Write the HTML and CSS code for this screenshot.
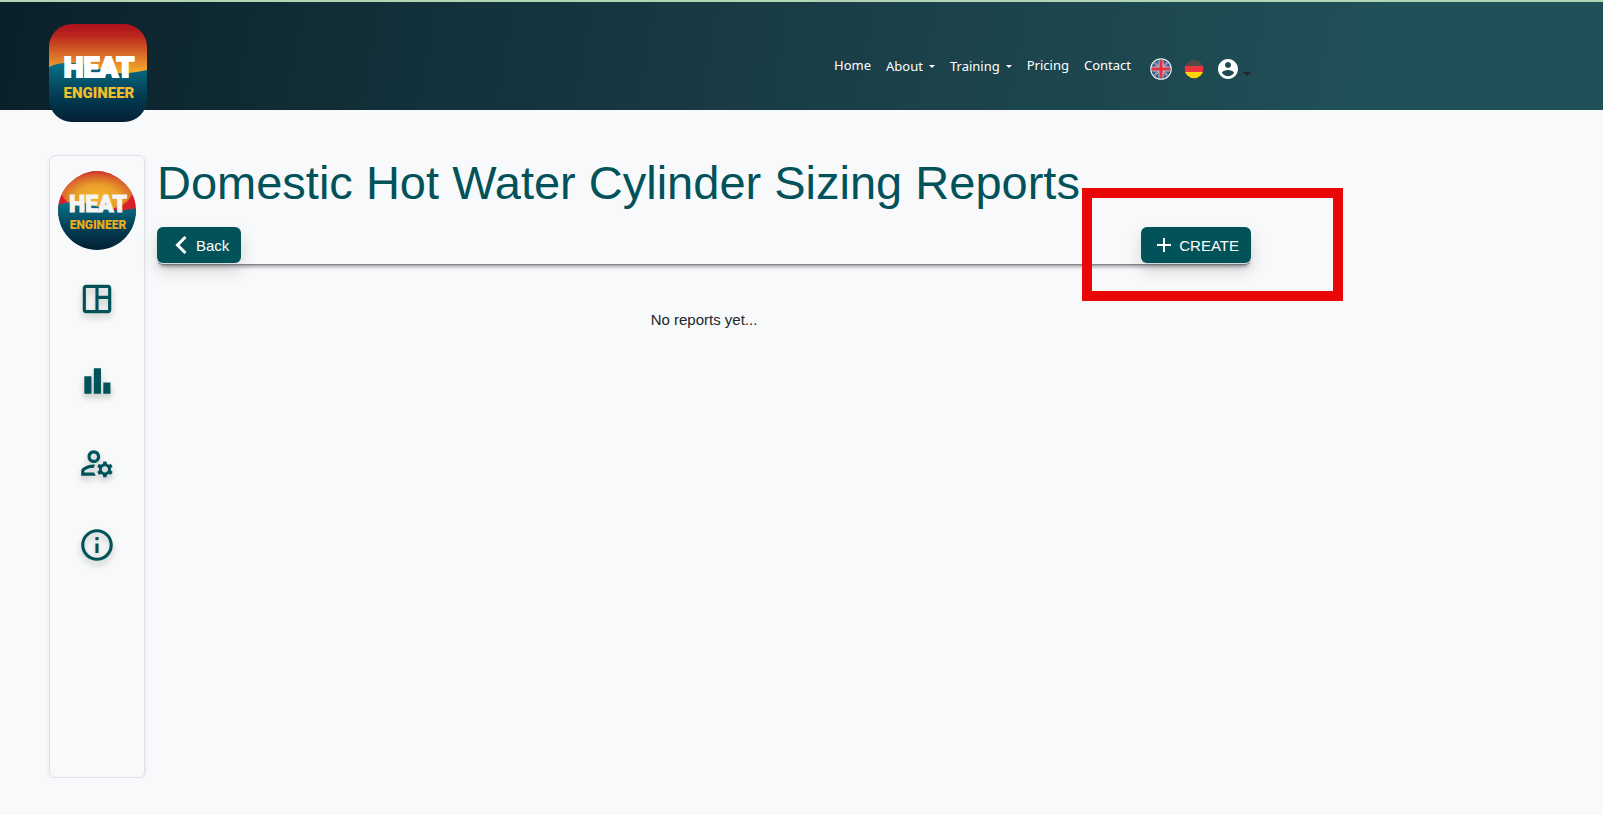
FILE: index.html
```html
<!DOCTYPE html>
<html lang="en">
<head>
<meta charset="utf-8">
<meta name="viewport" content="width=device-width, initial-scale=1">
<title>Heat Engineer – Cylinder Sizing Reports</title>
<link rel="stylesheet" href="styles.css">
</head>
<body>
<header class="header">
  <div class="container header-row">
    <a class="brand" href="#" aria-label="Heat Engineer">
      <svg viewBox="0 0 98 98" class="logo">
        <defs>
          <linearGradient id="fire" x1="0" y1="0" x2="0" y2="1"><stop offset="0" stop-color="#ad111d"/><stop offset=".22" stop-color="#b9251e"/><stop offset=".75" stop-color="#e88a2b"/><stop offset="1" stop-color="#f4bc2c"/></linearGradient>
          <linearGradient id="sea" x1="0" y1="0" x2="0" y2="1"><stop offset="0" stop-color="#08748a"/><stop offset=".5" stop-color="#034158"/><stop offset="1" stop-color="#022033"/></linearGradient>
          <clipPath id="tile"><rect width="98" height="98" rx="23"/></clipPath>
        </defs>
        <g clip-path="url(#tile)">
          <rect width="98" height="52" fill="url(#fire)"/>
          <path d="M0 43C12 37 28 38 42 42C58 47 66 53 98 46V98H0Z" fill="url(#sea)"/>
        </g>
        <text class="logo-heat" x="50" y="53" text-anchor="middle">HEAT</text>
        <text class="logo-engineer" x="50" y="74" text-anchor="middle">ENGINEER</text>
      </svg>
    </a>
    <nav class="nav">
      <a href="#">Home</a>
      <a class="drop" href="#">About<i class="caret"></i></a>
      <a class="drop" href="#">Training<i class="caret"></i></a>
      <a href="#">Pricing</a>
      <a href="#">Contact</a>
    </nav>
    <div class="tools">
      <button class="tool" aria-label="English">
        <svg width="22" height="22" viewBox="0 0 22 22">
          <clipPath id="uk"><circle cx="11" cy="11" r="9"/></clipPath>
          <g clip-path="url(#uk)"><rect width="22" height="22" fill="#2f62a6"/><path d="M2 2L20 20M20 2L2 20" stroke="#a9b4cd" stroke-width="2"/><path d="M2 2L20 20M20 2L2 20" stroke="#c9606f" stroke-width="1"/><path d="M11 1V21M1 11H21" stroke="#c9bccb" stroke-width="5"/><path d="M11 1V21M1 11H21" stroke="#e52f3e" stroke-width="3"/></g>
          <circle cx="11" cy="11" r="10.2" fill="none" stroke="#e8eef0" stroke-width="1.2"/>
        </svg>
      </button>
      <button class="tool" aria-label="Deutsch">
        <svg width="20" height="20" viewBox="0 0 20 20">
          <clipPath id="de"><circle cx="10" cy="10" r="9.3"/></clipPath>
          <g clip-path="url(#de)"><rect width="20" height="7" fill="#504c4c"/><rect y="7" width="20" height="7" fill="#ee3640"/><rect y="13" width="20" height="7" fill="#fdd406"/></g>
        </svg>
      </button>
      <button class="tool account" aria-label="Account">
        <svg width="24" height="24" viewBox="0 0 24 24"><path fill="#fff" d="M12 2C6.480 2 2 6.480 2 12s4.480 10 10 10 10-4.480 10-10S17.520 2 12 2zm0 3c1.660 0 3 1.340 3 3s-1.340 3-3 3-3-1.340-3-3 1.340-3 3-3zm0 14.200c-2.500 0-4.710-1.280-6-3.220.03-1.990 4-3.080 6-3.080 1.990 0 5.970 1.090 6 3.080-1.290 1.940-3.500 3.220-6 3.220z"/></svg>
        <i class="caret caret-dark"></i>
      </button>
    </div>
  </div>
</header>
<div class="container page">
  <aside class="sidebar">
    <a href="#" class="avatar" aria-label="Company profile">
      <svg width="80" height="80" viewBox="0 0 80 80">
        <defs>
          <radialGradient id="sun" cx=".5" cy=".68" r=".68"><stop offset="0" stop-color="#f4b52a"/><stop offset=".45" stop-color="#e9a02b"/><stop offset=".8" stop-color="#d6572a"/><stop offset="1" stop-color="#c21e25"/></radialGradient>
          <clipPath id="disc"><path d="M40 1C57 1 79 17 79 40C79 66 58 80 40 80C22 80 1 66 1 40C1 17 23 1 40 1Z"/></clipPath>
        </defs>
        <g clip-path="url(#disc)">
          <rect width="80" height="46" fill="#d81f2a"/>
          <ellipse cx="40" cy="20" rx="36" ry="21" fill="url(#sun)"/>
          <path d="M0 35C12 31 24 31 36 35C51 40 60 42 80 38V80H0Z" fill="url(#sea)"/>
        </g>
        <text class="disc-heat" x="41" y="42" text-anchor="middle">HEAT</text>
        <text class="disc-engineer" x="41" y="59" text-anchor="middle">ENGINEER</text>
      </svg>
    </a>
    <nav class="side-nav">
      <a href="#" aria-label="Dashboard"><svg viewBox="0 0 24 24"><path d="M19 3H5c-1.100 0-2 .9-2 2v14c0 1.100.9 2 2 2h14c1.100 0 2-.9 2-2V5c0-1.100-.9-2-2-2zM5 19V5h6v14H5zm14 0h-6v-7h6v7zm0-9h-6V5h6v5z"/></svg></a>
      <a href="#" aria-label="Reports"><svg viewBox="0 0 24 24"><path d="M4 9h4.500v11H4zm12 4h4.500v7H16zM10 4h4.500v16H10z"/></svg></a>
      <a href="#" aria-label="Account settings"><svg viewBox="0 0 24 24"><path d="M4 18v-.65c0-.34.16-.66.41-.81C6.100 15.530 8.030 15 10 15c.03 0 .05 0 .08.01.1-.7.3-1.370.59-1.980-.22-.02-.44-.03-.67-.03-2.420 0-4.680.67-6.610 1.820-.88.52-1.390 1.500-1.390 2.530V20h9.260c-.42-.6-.75-1.280-.97-2H4zM10 12c2.210 0 4-1.790 4-4s-1.790-4-4-4-4 1.790-4 4 1.790 4 4 4zm0-6c1.100 0 2 .9 2 2s-.9 2-2 2-2-.9-2-2 .9-2 2-2zM20.750 16c0-.22-.03-.42-.06-.63l1.140-1.010-1-1.730-1.450.49c-.32-.27-.68-.48-1.080-.63L18 11h-2l-.3 1.490c-.4.15-.76.36-1.080.63l-1.450-.49-1 1.730 1.140 1.010c-.03.21-.06.41-.06.63s.03.42.06.63l-1.140 1.010 1 1.730 1.450-.49c.32.27.68.48 1.080.63L16 21h2l.3-1.490c.4-.15.76-.36 1.080-.63l1.450.49 1-1.730-1.140-1.010c.03-.21.06-.41.06-.63zM17 18c-1.100 0-2-.9-2-2s.9-2 2-2 2 .9 2 2-.9 2-2 2z"/></svg></a>
      <a href="#" aria-label="Information"><svg viewBox="0 0 24 24"><path d="M11 7h2v2h-2zm0 4h2v6h-2zm1-9C6.480 2 2 6.480 2 12s4.480 10 10 10 10-4.480 10-10S17.520 2 12 2zm0 18c-4.410 0-8-3.590-8-8s3.590-8 8-8 8 3.590 8 8-3.590 8-8 8z"/></svg></a>
    </nav>
  </aside>
  <main class="main">
    <h1 class="title">Domestic Hot Water Cylinder Sizing Reports</h1>
    <div class="actions">
      <button class="btn btn-back"><svg width="12" height="18" viewBox="0 0 12 18"><path d="M10.500 1L2.500 9L10.500 17" fill="none" stroke="#fff" stroke-width="3"/></svg>Back</button>
      <button class="btn"><svg width="14" height="14" viewBox="0 0 14 14"><path d="M7 0V14M0 7H14" stroke="#fff" stroke-width="2"/></svg>CREATE</button>
    </div>
    <p class="empty">No reports yet...</p>
    <div class="highlight"></div>
  </main>
</div>
</body>
</html>
```
FILE: styles.css
```css
* { box-sizing: border-box; }
body {
  margin: 0;
  background: #f8f9fb;
  color: #212529;
  font-family: "Liberation Sans", Arial, sans-serif;
}
a { color: inherit; text-decoration: none; }
button { border: 0; cursor: pointer; font-family: inherit; }
svg { display: block; }

.container { max-width: 1251px; padding-left: 49px; }

.header {
  height: 110px;
  border-top: 2px solid #b2d5b4;
  background: linear-gradient(100deg, #0a2029 0%, #123039 25%, #1a3e47 52%, #205058 86%, #205058 100%);
  color: #fff;
}
.header-row { display: flex; align-items: flex-start; }
.brand { margin: 22px auto 0 0; }
.logo { width: 98px; height: 98px; }
.logo text, .avatar text {
  font-family: Roboto, sans-serif;
  font-weight: 900;
}
.logo-heat { font-size: 28px; fill: #fff; stroke: #fff; stroke-width: 2px; }
.logo-engineer { font-size: 15px; fill: #f2bd2c; }
.disc-heat { font-size: 23px; fill: #f4f4f4; stroke: #f4f4f4; stroke-width: 1px; }
.disc-engineer { font-size: 12px; fill: #e9ac1c; }

.nav {
  display: flex;
  gap: 15px;
  margin-top: 53px;
  font: 400 13px/20px "Noto Sans", "Open Sans", sans-serif;
}
.drop { display: flex; align-items: center; gap: 6px; padding-top: 1px; }
.caret {
  border: 3px solid transparent;
  border-top-color: currentColor;
  border-bottom: 0;
}
.tools { display: flex; align-items: center; margin: 55px 0 0 19px; gap: 12px; }
.tool { display: flex; align-items: center; padding: 0; background: none; }
.account { gap: 3px; }
.caret-dark { border-width: 4px 4px 0; border-top-color: #212529; margin-top: 10px; }

.page { display: flex; gap: 12px; padding-top: 45px; }
.sidebar {
  flex: none;
  width: 96px;
  min-height: calc(100vh - 192px);
  padding-top: 14px;
  border: 1px solid #dee0e3;
  border-radius: 6px;
  box-shadow: 0 2px 4px rgba(0, 0, 0, .07);
}
.avatar { display: flex; justify-content: center; }
.side-nav { display: flex; flex-direction: column; align-items: center; gap: 30px; margin-top: 23px; }
.side-nav a { padding: 7px; background: #f8faf9; }
.side-nav svg {
  width: 38px;
  height: 38px;
  fill: #02525a;
  filter: drop-shadow(0 4px 3px rgba(0, 0, 0, .22));
}

.main { position: relative; flex: 1; }
.title { margin: 0; color: #02525a; font-size: 47px; font-weight: 400; line-height: 56px; }
.actions {
  display: flex;
  justify-content: space-between;
  margin-top: 16px;
  padding-bottom: 1px;
  border-bottom: 1px solid #85878a;
  border-radius: 6px;
  box-shadow: 0 4px 4px -3px rgba(0, 0, 0, .5);
}
.btn {
  display: flex;
  align-items: center;
  gap: 8px;
  height: 36px;
  padding: 0 12px 0 16px;
  border-radius: 6px;
  background: #02525a;
  color: #fff;
  font-size: 15px;
  box-shadow: 0 8px 16px rgba(0, 0, 0, .15);
}
.btn-back { gap: 9px; padding-left: 18px; }
.empty { margin: 45px 0 0; font-size: 15px; line-height: 20px; text-align: center; }
.highlight {
  position: absolute;
  top: 33px;
  right: -92px;
  width: 261px;
  height: 113px;
  border: 10px solid #e90707;
  pointer-events: none;
}
```
